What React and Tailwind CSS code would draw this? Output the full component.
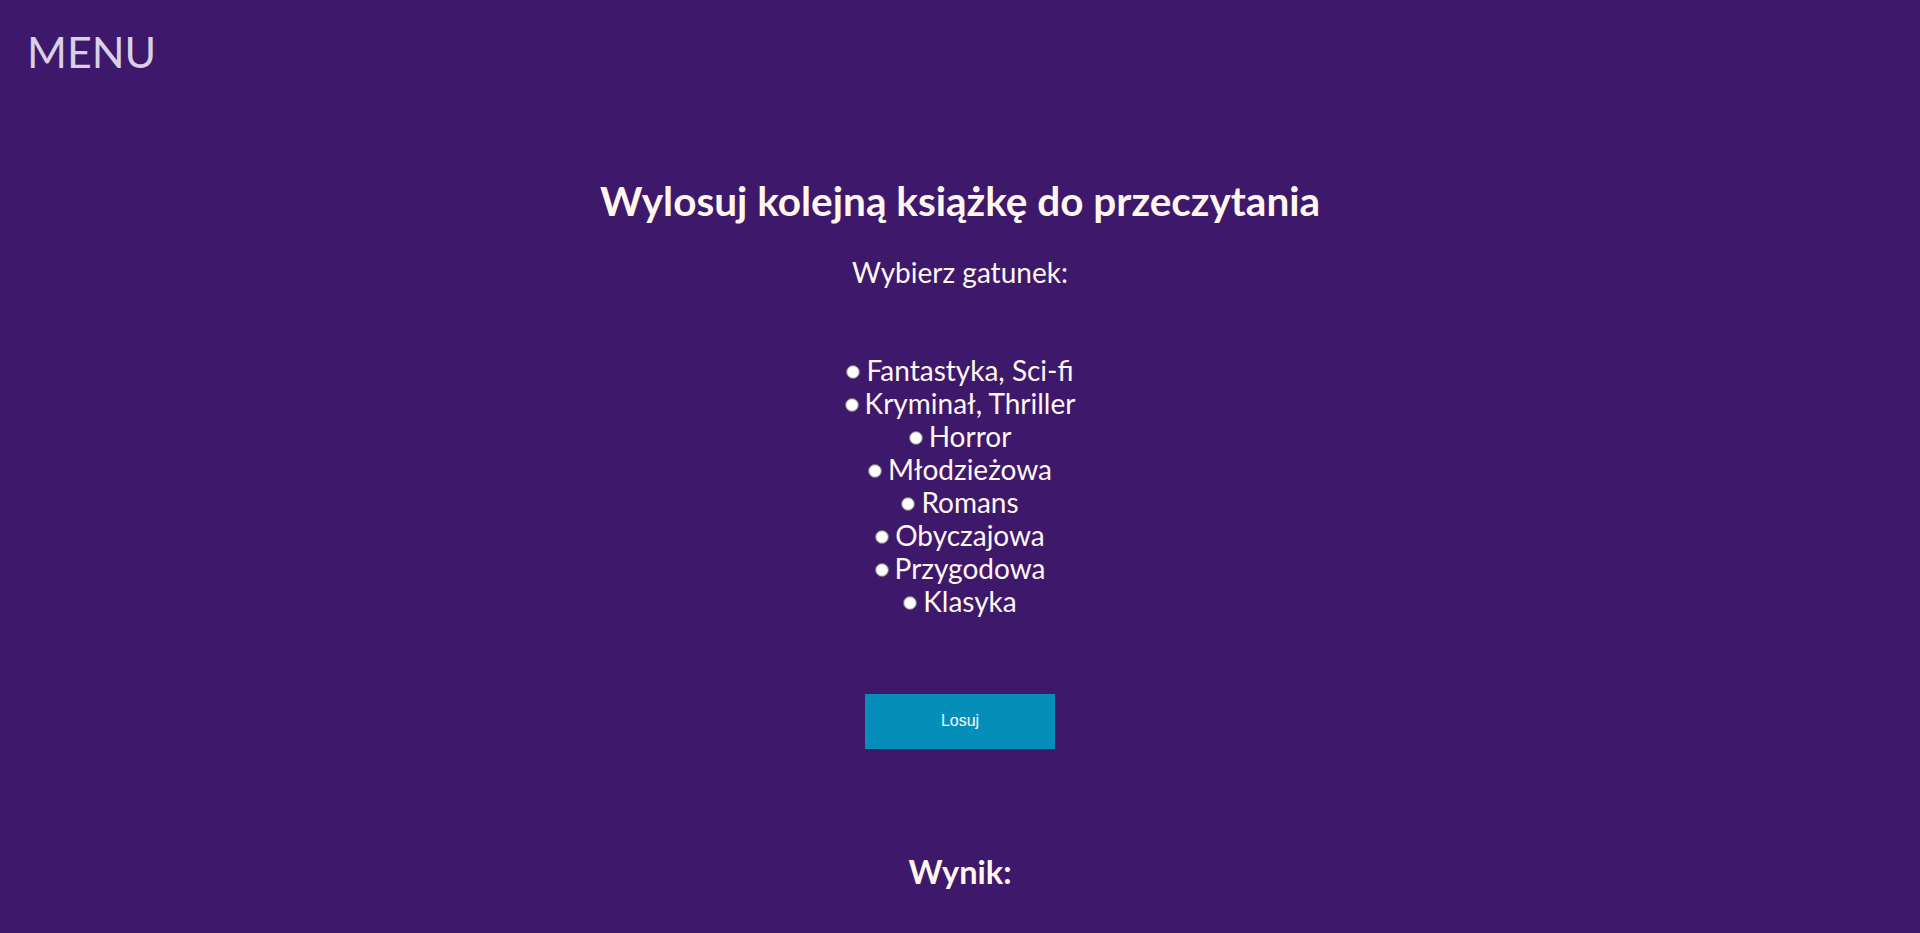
import { useState } from "react";

const genres = [
  "Fantastyka, Sci-fi",
  "Kryminał, Thriller",
  "Horror",
  "Młodzieżowa",
  "Romans",
  "Obyczajowa",
  "Przygodowa",
  "Klasyka",
];

const App = () => {
  const [genre, setGenre] = useState("");

  return (
    <div className="min-h-screen bg-[#3e196b] font-['Lato','Noto_Sans',sans-serif] text-[#fff6f0]">
      {/* top bar */}
      <div className="px-[27px] pt-[26px]">
        <span className="text-[43px] leading-[1.2] text-[#d9d0e6]">MENU</span>
      </div>

      <div className="flex flex-col items-center">
        <h1 className="mt-[99px] text-[40.5px] leading-[1.2] font-bold">
          Wylosuj kolejną książkę do przeczytania
        </h1>
        <p className="mt-[31px] text-[28px] leading-[1.2]">Wybierz gatunek:</p>

        <form className="mt-[64px] flex flex-col items-center text-[28px] leading-[33px]">
          {genres.map((g) => (
            <label key={g} className="flex items-baseline gap-[6px]">
              <input
                type="radio"
                name="genre"
                value={g}
                checked={genre === g}
                onChange={() => setGenre(g)}
                className="appearance-none w-[14px] h-[14px] rounded-full bg-white border border-[#6f6f6f] shadow-[inset_0_0_1px_#9a9a9a] checked:bg-[#0a84d6] self-center translate-y-[2px]"
              />
              {g}
            </label>
          ))}
        </form>

        <button
          type="button"
          className="mt-[76px] w-[190px] h-[55px] bg-[#058fb8] text-white text-[16px] font-['Liberation_Sans',Arial,sans-serif]"
        >
          Losuj
        </button>

        <h2 className="mt-[103px] text-[32.5px] leading-[1.2] font-bold">Wynik:</h2>
      </div>
    </div>
  );
};

export default App;
